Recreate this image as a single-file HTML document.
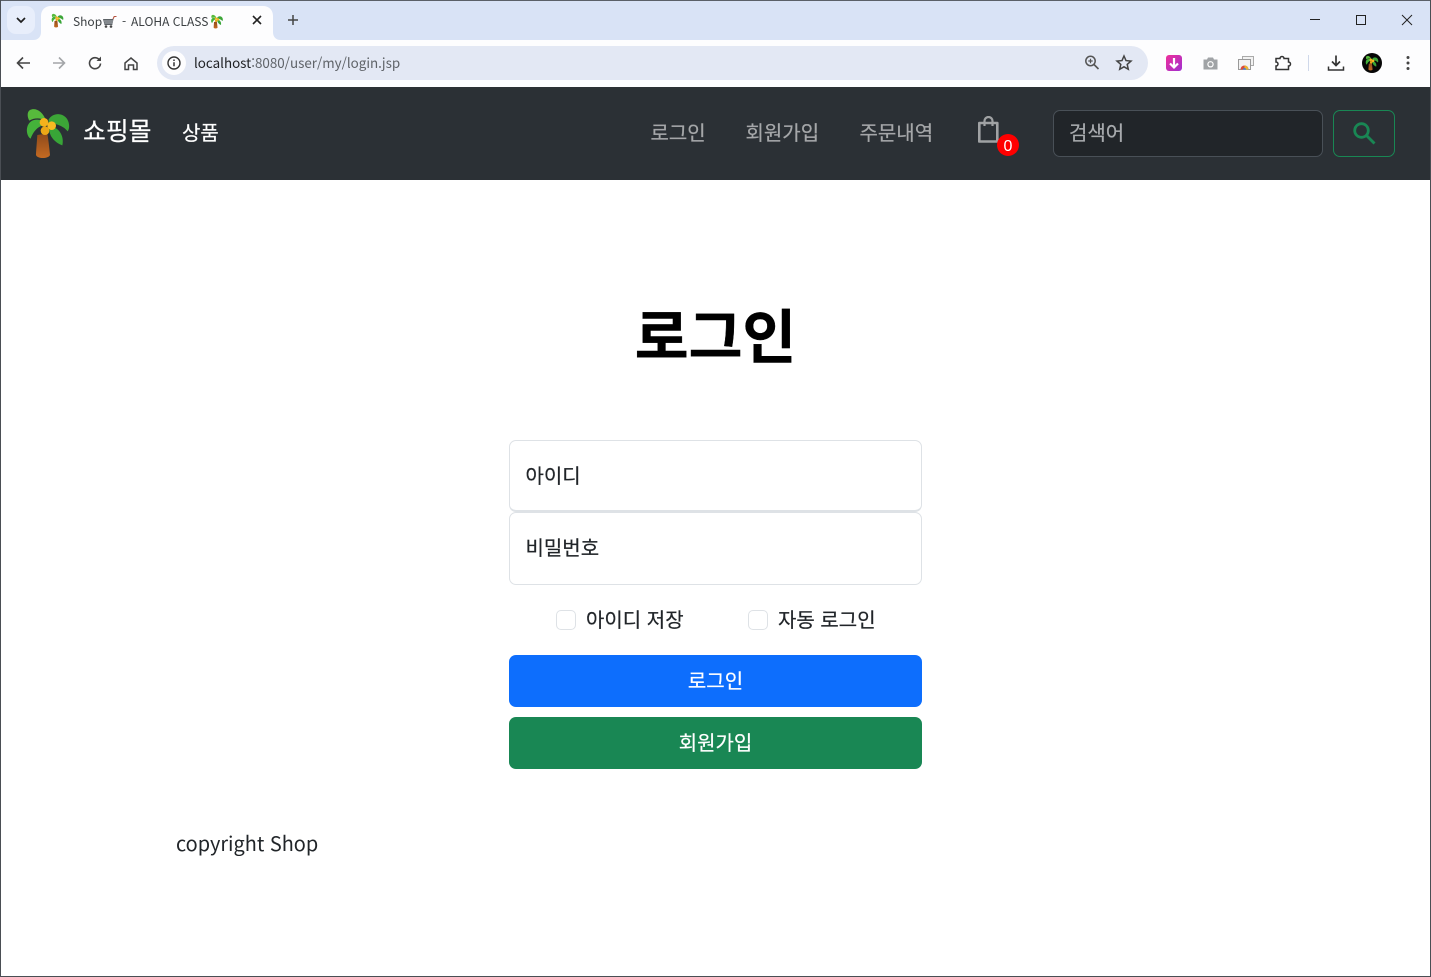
<!DOCTYPE html>
<html lang="ko"><head><meta charset="utf-8"><title>Shop - ALOHA CLASS</title>
<style>
*{box-sizing:border-box}
html,body{margin:0;padding:0;width:1431px;height:977px;overflow:hidden;background:#fff}
body{position:relative;font-family:"Liberation Sans","Noto Sans CJK KR",sans-serif}
.a{position:absolute}
.t{position:absolute;white-space:nowrap;font-family:"Noto Sans CJK KR","Liberation Sans",sans-serif;font-size:20px;line-height:30px;-webkit-text-stroke:.2px currentColor}
svg{position:absolute;display:block}
</style></head><body>
<svg width="0" height="0" style="position:absolute"><defs>
<linearGradient id="tr" x1="0" y1="0" x2="0" y2="1"><stop offset="0" stop-color="#8f4a1c"/><stop offset="1" stop-color="#c46a22"/></linearGradient>
<g id="palm">
<path d="M112 135 C110 165 108 185 108 195 C112 207 145 207 150 195 C148 175 146 155 142 130Z" fill="url(#tr)"/>
<path d="M138 92 C128 62 105 52 90 60 C80 66 82 82 88 92 C105 82 122 84 138 92Z" fill="#57ba3c"/>
<path d="M146 88 C160 66 190 68 202 88 C210 102 208 118 203 124 C190 108 170 100 146 100Z" fill="#3ca637"/>
<path d="M128 92 C105 84 85 92 81 115 C79 128 84 142 92 146 C98 128 110 112 128 106Z" fill="#44b23a"/>
<path d="M148 110 C172 108 194 134 187 166 C168 160 150 142 148 122Z" fill="#38a537"/>
<circle cx="132" cy="97" r="13" fill="#f5b21c"/><circle cx="155" cy="107" r="13" fill="#f8bb22"/><circle cx="135" cy="122" r="13" fill="#eda717"/>
</g></defs></svg>

<!-- browser chrome -->
<div class="a" style="left:0;top:0;width:1431px;height:87px;background:#d9e3f6;border-top:1px solid #5b6068"></div>
<div class="a" style="left:0;top:40px;width:1431px;height:47px;background:#fdfdfe"></div>
<div class="a" style="left:7px;top:6px;width:28px;height:28px;border-radius:9px;background:#e8eefb"></div>
<svg style="left:15px;top:16px" width="12" height="8" viewBox="0 0 12 8"><path d="M2 2l4 4 4-4" fill="none" stroke="#1f1f1f" stroke-width="1.7"/></svg>
<svg style="left:33px;top:6px" width="248" height="34" viewBox="0 0 248 34"><path d="M0 34 C6 34 8 30 8 26 V10 C8 4 12 0 18 0 H230 C236 0 240 4 240 10 V26 C240 30 242 34 248 34Z" fill="#fdfdfe"/></svg>
<svg style="left:51px;top:13px" width="13" height="15" viewBox="75 48 138 162"><use href="#palm"/></svg>
<div class="t" style="left:73px;top:13px;font-size:12px;line-height:17px;color:#3c4043;-webkit-text-stroke:0">Shop</div>
<svg style="left:102px;top:15px" width="15" height="13" viewBox="0 0 15 13"><path d="M1 4h10.500l-1.200 6H2.500Z" fill="#5c6166"/><path d="M2 6h9M2.500 8h8" stroke="#c8ccd0" stroke-width=".7"/><path d="M11 4l1.200-2.500H14.500" stroke="#b5533f" stroke-width="1.100" fill="none"/><circle cx="4" cy="11.500" r="1.300" fill="#444"/><circle cx="9" cy="11.500" r="1.300" fill="#444"/></svg>
<div class="t" style="left:122px;top:13px;font-size:12px;line-height:17px;color:#3c4043;-webkit-text-stroke:0">-</div>
<div class="t" style="left:131px;top:13px;font-size:12px;line-height:17px;color:#3c4043;-webkit-text-stroke:0">ALOHA CLASS</div>
<svg style="left:210px;top:14px" width="14" height="15" viewBox="75 48 138 162"><use href="#palm"/></svg>
<svg style="left:251px;top:14px" width="12" height="12" viewBox="0 0 12 12"><path d="M2 2l8 8M10 2l-8 8" stroke="#222" stroke-width="1.600"/></svg>
<svg style="left:287px;top:14px" width="12" height="12" viewBox="0 0 12 12"><path d="M6 1v10M1 6h10" stroke="#444" stroke-width="1.500"/></svg>
<svg style="left:1305px;top:10px" width="118" height="20" viewBox="0 0 118 20"><path d="M5 9.500h10" stroke="#222" stroke-width="1"/><rect x="51.500" y="5.500" width="9" height="9" fill="none" stroke="#222" stroke-width="1"/><path d="M97 5l10 10M107 5l-10 10" stroke="#222" stroke-width="1"/></svg>

<svg style="left:14px;top:54px" width="130" height="18" viewBox="0 0 130 18">
<path d="M16 9H4M9 3.500L3.500 9 9 14.500" fill="none" stroke="#444" stroke-width="1.600"/>
<path d="M51 9H39M45 3.500L50.500 9 45 14.500" fill="none" stroke="#a3a5a8" stroke-width="1.600"/>
<path d="M85.500 6a5.500 5.500 0 1 0 1 3.500" fill="none" stroke="#444" stroke-width="1.600"/><path d="M87 2.500v4.500H82.500Z" fill="#444"/>
<path d="M111 9l6-5 6 5v6.500h-3.500V11h-5v4.500H111Z" fill="none" stroke="#444" stroke-width="1.500"/>
</svg>
<div class="a" style="left:157px;top:46px;width:991px;height:34px;border-radius:17px;background:#e3e8f4"></div>
<div class="a" style="left:162px;top:51px;width:24px;height:24px;border-radius:12px;background:#fdfdfe"></div>
<svg style="left:166px;top:55px" width="16" height="16" viewBox="0 0 16 16"><circle cx="8" cy="8" r="6" fill="none" stroke="#333" stroke-width="1.400"/><path d="M8 7.200v4M8 4.500v1.500" stroke="#333" stroke-width="1.500"/></svg>
<div class="t" style="left:194px;top:52px;font-size:13.400px;line-height:20px;color:#5f6368;-webkit-text-stroke:0"><span style="color:#202124">localhost</span>:8080/user/my/login.jsp</div>
<svg style="left:1084px;top:54px" width="50" height="18" viewBox="0 0 50 18">
<circle cx="6.500" cy="7" r="4.700" fill="none" stroke="#555" stroke-width="1.500"/><path d="M10 10.500l4.500 4.500" stroke="#555" stroke-width="1.600"/><path d="M4.300 7h4.400M6.500 4.800v4.400" stroke="#555" stroke-width="1.200"/>
<path d="M40 2l2 4.600 5 .5-3.800 3.300 1.100 4.900L40 12.800l-4.300 2.500 1.100-4.900L33 7.100l5-.5Z" fill="none" stroke="#444" stroke-width="1.500"/>
</svg>
<div class="a" style="left:1166px;top:55px;width:16px;height:16px;border-radius:3px;background:linear-gradient(135deg,#ef2f9a,#a02fd0)"></div>
<svg style="left:1166px;top:55px" width="16" height="16" viewBox="0 0 16 16"><path d="M8 3v9M4 8.500l4 4 4-4" fill="none" stroke="#fff" stroke-width="2.200"/></svg>
<svg style="left:1203px;top:56px" width="15" height="15" viewBox="0 0 15 15"><path d="M0.500 3.500h3.500l1-2h5l1 2h3.500v10H0.500Z" fill="#a0a3a6"/><circle cx="7.500" cy="8.300" r="3.200" fill="#fff"/><circle cx="7.500" cy="8.300" r="2" fill="#a0a3a6"/></svg>
<svg style="left:1238px;top:56px" width="16" height="14" viewBox="0 0 16 14"><rect x="4.500" y="0.500" width="11" height="9" fill="#f2f2f2" stroke="#aaa"/><rect x="0.500" y="3.500" width="12" height="10" fill="#f2f2f2" stroke="#999"/><path d="M2.500 13.500a4 4 0 0 1 8 0Z" fill="#d9473b"/><path d="M6.500 13.500V9.500a4 4 0 0 1 4 4Z" fill="#e9b52d"/><path d="M5 13.500a1.500 1.500 0 0 1 3 0Z" fill="#3b7de0"/></svg>
<svg style="left:1274px;top:54px" width="18" height="18" viewBox="0 0 18 18"><path d="M2 4.500h4a2 2 0 0 1 4 0h4.500v3.500a2 2 0 0 1 0 4v3.500H2v-3.500a2 2 0 0 0 0-4Z" fill="none" stroke="#333" stroke-width="1.500"/></svg>
<div class="a" style="left:1308px;top:55px;width:1px;height:16px;background:#cfd8ea"></div>
<svg style="left:1327px;top:54px" width="18" height="18" viewBox="0 0 18 18"><path d="M9 1.500V11M5 7.500l4 4 4-4" fill="none" stroke="#333" stroke-width="1.700"/><path d="M1.500 12.500V16h15v-3.500" fill="none" stroke="#333" stroke-width="1.500"/></svg>
<div class="a" style="left:1362px;top:53px;width:20px;height:20px;border-radius:50%;background:#070707"></div>
<svg style="left:1365px;top:55px" width="14" height="16" viewBox="75 48 138 162"><use href="#palm"/></svg>
<svg style="left:1405px;top:55px" width="6" height="16" viewBox="0 0 6 16"><circle cx="3" cy="2.500" r="1.500" fill="#444"/><circle cx="3" cy="8" r="1.500" fill="#444"/><circle cx="3" cy="13.500" r="1.500" fill="#444"/></svg>

<!-- navbar -->
<div class="a" style="left:0;top:87px;width:1431px;height:93px;background:#2b3035"></div>
<svg style="left:25px;top:106px" width="46" height="54" viewBox="75 48 138 162"><use href="#palm"/></svg>
<div class="t" style="left:83px;top:112px;font-size:24.800px;line-height:37px;color:#fff">쇼핑몰</div>
<div class="t" style="left:182px;top:117px;color:#fff">상품</div>
<div class="t" style="left:650.500px;top:117px;color:#a5a7a9">로그인</div>
<div class="t" style="left:745.500px;top:117px;color:#a5a7a9">회원가입</div>
<div class="t" style="left:859.500px;top:117px;color:#a5a7a9">주문내역</div>
<svg style="left:977px;top:116px" width="23" height="27" viewBox="0 0 23 27"><path d="M2.300 7h18v18.500h-18Z" fill="none" stroke="#a0a2a4" stroke-width="2.600" stroke-linejoin="round"/><path d="M7.500 10V5a4 4 0 0 1 8 0V10" fill="none" stroke="#a0a2a4" stroke-width="2.200"/></svg>
<div class="a" style="left:997px;top:134px;width:22px;height:22px;border-radius:50%;background:#f00"></div>
<div class="t" style="left:997px;top:134.500px;width:22px;text-align:center;font-family:'Liberation Sans',sans-serif;font-size:16px;line-height:24px;color:#fff;-webkit-text-stroke:0">0</div>
<div class="a" style="left:1053px;top:110px;width:270px;height:47px;border-radius:7px;background:#212529;border:1px solid #495057"></div>
<div class="t" style="left:1069px;top:117px;color:#a8abae">검색어</div>
<div class="a" style="left:1333px;top:110px;width:62px;height:47px;border-radius:7px;border:1px solid #198754"></div>
<svg style="left:1353px;top:122px" width="23" height="23" viewBox="0 0 23 23"><circle cx="8.500" cy="8.500" r="6.800" fill="none" stroke="#198754" stroke-width="2.800"/><path d="M13.500 13.500l8 8" stroke="#198754" stroke-width="2.800"/></svg>

<!-- content -->
<div class="t" style="left:0;top:290px;width:1431px;text-align:center;font-size:58.500px;line-height:86px;font-weight:700;color:#000;-webkit-text-stroke:.4px #000">로그인</div>
<div class="a" style="left:509px;top:440px;width:413px;height:72px;border:1px solid #dee2e6;border-bottom-width:2px;border-radius:7px"></div>
<div class="t" style="left:525.500px;top:460px;color:#212529">아이디</div>
<div class="a" style="left:509px;top:512px;width:413px;height:73px;border:1px solid #dee2e6;border-radius:7px;background:#fff"></div>
<div class="t" style="left:525.500px;top:532px;color:#212529">비밀번호</div>
<div class="a" style="left:556px;top:610px;width:20px;height:20px;border:1px solid #dee2e6;border-radius:5px"></div>
<div class="t" style="left:586px;top:604px;color:#212529">아이디 저장</div>
<div class="a" style="left:748px;top:610px;width:20px;height:20px;border:1px solid #dee2e6;border-radius:5px"></div>
<div class="t" style="left:778px;top:604px;color:#212529">자동 로그인</div>
<div class="a" style="left:509px;top:655px;width:413px;height:52px;border-radius:7px;background:#0d6efd"></div>
<div class="t" style="left:509px;top:665px;width:413px;text-align:center;color:#fff">로그인</div>
<div class="a" style="left:509px;top:717px;width:413px;height:52px;border-radius:7px;background:#198754"></div>
<div class="t" style="left:509px;top:727px;width:413px;text-align:center;color:#fff">회원가입</div>
<div class="t" style="left:176px;top:828px;font-size:19.900px;color:#212529;-webkit-text-stroke:0">copyright Shop</div>

<!-- window edge -->
<div class="a" style="left:0;top:0;width:1431px;height:977px;border:1px solid #4a4e54;border-top:0;pointer-events:none"></div>
</body></html>
